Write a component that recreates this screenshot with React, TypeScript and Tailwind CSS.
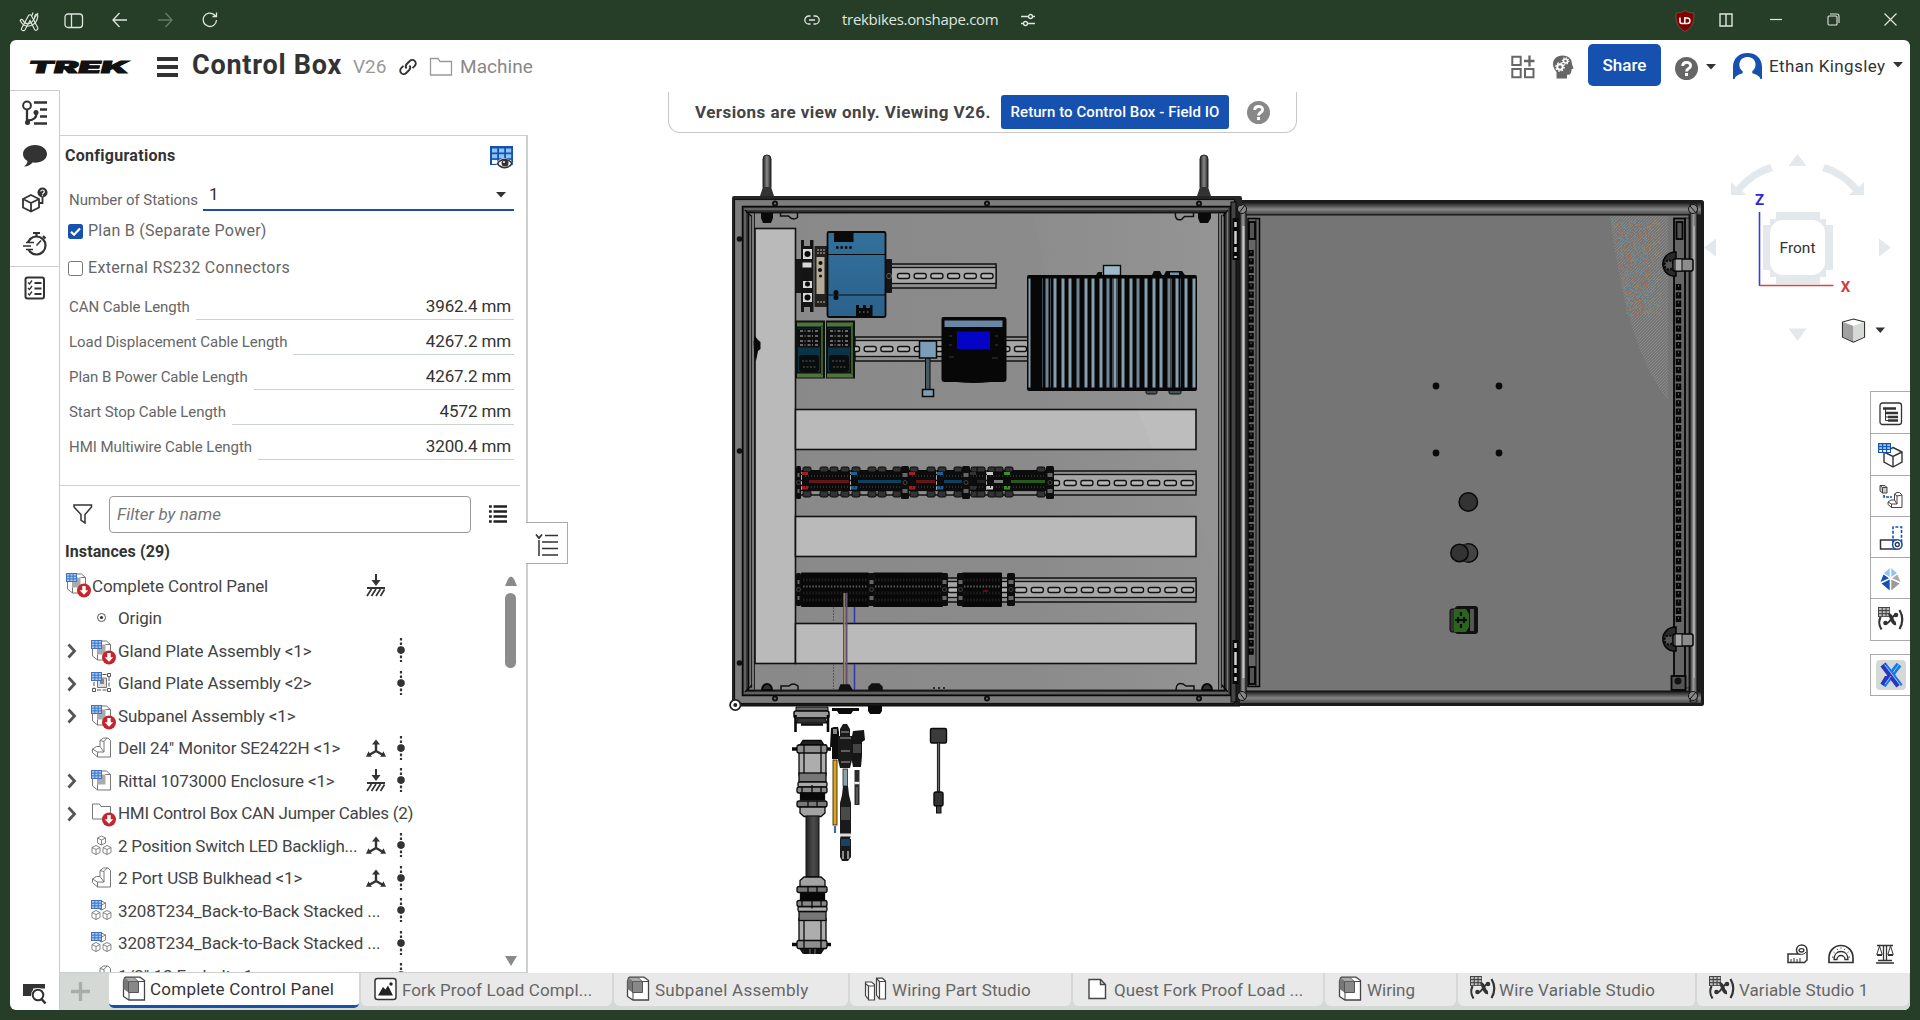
import React from "react";

const INK = "#333";

function Svg({ w, h, vb, children, className = "" }: { w: number; h: number; vb?: string; children: React.ReactNode; className?: string }) {
  return (
    <svg width={w} height={h} viewBox={vb ?? `0 0 ${w} ${h}`} fill="none" className={`block shrink-0 ${className}`}>
      {children}
    </svg>
  );
}

const Caret = ({ className = "" }: { className?: string }) => (
  <Svg w={10} h={6} className={className}>
    <path d="M0 0h10L5 5.5z" fill={INK} />
  </Svg>
);

/* ---------- small icons ---------- */

const GridBadge = ({ x = 0, y = 0, w = 11, h = 9 }: { x?: number; y?: number; w?: number; h?: number }) => (
  <g>
    <rect x={x} y={y} width={w} height={h} fill="#3c72c4" />
    {[0, 1, 2].map((c) =>
      [0, 1, 2].map((r) => (
        <rect key={`${c}${r}`} x={x + 1 + (c * (w - 1)) / 3} y={y + 1 + (r * (h - 1)) / 3} width={(w - 1) / 3 - 1} height={(h - 1) / 3 - 1} fill="#a9c9f2" />
      )),
    )}
  </g>
);

const AlertBadge = () => (
  <g>
    <circle cx="18" cy="17.5" r="7" fill="#c4262e" />
    <path d="M16.3 13h3.4v4.2h2.6L18 21.8l-4.3-4.6h2.6z" fill="#fff" />
  </g>
);

const AssemblyShape = () => (
  <g>
    <path d="M1.5 5.5v10.5l5 4H19.5V4.5L15.5 1H5z" fill="#fff" stroke="#777" />
    <path d="M6 4.5h8.5v10H6z" fill="#aaa" />
    <path d="M14.5 4.5h5M6.5 20v-5.5" stroke="#777" />
  </g>
);

const PartShape = () => (
  <path d="M1.5 12l4-2.5H9V3.5L12.5 1H17l2.5 2.5V20H6.5l-5-4.500zM1.500 12l5 3h6.500V4.500L9 3.500M13 4.500L16 1M6.500 15v5M13 15L9 9.500" fill="#fff" stroke="#777" strokeLinejoin="round" />
);

const Cubelet = ({ x, y }: { x: number; y: number }) => (
  <path transform={`translate(${x} ${y})`} d="M4.5.5l4 2v5l-4 2-4-2v-5zM.5 2.5l4 2 4-2M4.5 4.5v5" fill="#fff" stroke="#777" strokeWidth=".9" />
);

type NodeKind = "asmAlert" | "asm" | "pattern" | "part" | "folderAlert" | "cubes" | "cubesGrid" | "origin";

function NodeIcon({ kind }: { kind: NodeKind }) {
  return (
    <Svg w={26} h={26}>
      {(kind === "asmAlert" || kind === "asm") && (
        <>
          <AssemblyShape />
          <GridBadge x={0} y={0} />
          {kind === "asmAlert" && <AlertBadge />}
        </>
      )}
      {kind === "pattern" && (
        <>
          <path d="M3 10v7M6 18h9.500M18 5v11M11.500 2.500h4" stroke="#555" strokeDasharray="4 1.500" />
          <path d="M1.500 16.500h3v3h-3zM16.500 16.500h3v3h-3zM16.500 1.500h3v3h-3z" fill="#fff" stroke="#555" />
          <path d="M6.500 8v7.500h9V6H9z" fill="#ddd" stroke="#777" />
          <path d="M9 7h4v5H9z" fill="#888" />
          <GridBadge />
        </>
      )}
      {kind === "part" && <PartShape />}
      {kind === "folderAlert" && (
        <>
          <path d="M1.500 2h7l1.500 2.500h9.500V17h-18z" fill="#fff" stroke="#777" />
          <AlertBadge />
        </>
      )}
      {(kind === "cubes" || kind === "cubesGrid") && (
        <>
          <Cubelet x={6} y={0.5} />
          <Cubelet x={0.5} y={10} />
          <Cubelet x={11.500} y={10} />
          {kind === "cubesGrid" && <GridBadge />}
        </>
      )}
      {kind === "origin" && (
        <>
          <circle cx="10.500" cy="10.500" r="4" stroke="#555" />
          <circle cx="10.500" cy="10.500" r="1.600" fill="#333" />
        </>
      )}
    </Svg>
  );
}

const Grounded = () => (
  <Svg w={20} h={24} className="-ml-px">
    <path d="M10 0v7M1 14h18" stroke={INK} strokeWidth="2" />
    <path d="M5.500 6h9L10 12z" fill={INK} />
    <path d="M1 22l4.500-7M5.500 22l4.500-7M10 22l4.500-7M14.500 22l4-6.500" stroke={INK} strokeWidth="1.700" />
  </Svg>
);

const Mated = () => (
  <Svg w={20} h={20} className="-ml-px">
    <path d="M10 3v9L3 16M10 12l7 4" stroke={INK} strokeWidth="2.400" />
    <path d="M6 5.500L10 .5l4 5zM0 17.800l2.500-5.500 3.300 5.500zM20 17.800l-2.500-5.500-3.300 5.500z" fill={INK} />
  </Svg>
);

const Dots = () => (
  <Svg w={8} h={26} className="-mt-0.5">
    <path d="M4 1v24" stroke={INK} strokeWidth="2.200" strokeDasharray="2.600 1.800" />
    <circle cx="4" cy="13" r="3.800" fill={INK} />
  </Svg>
);

const AssemblyTab = () => (
  <Svg w={24} h={25} className="-mt-0.5">
    <path d="M1.500 5v15.500l5.500 3.500H22.500V4.500L18 1.200H3.500z" fill="#fff" stroke="#444" strokeWidth="1.300" />
    <path d="M1.500 2l5 3.500v11L1.500 13z" fill="#777" />
    <path d="M6.500 5.500h10v11h-10z" fill="#888" stroke="#555" />
    <path d="M2 1.500h10l4.500 4h-10z" fill="#aaa" stroke="#555" strokeWidth=".8" />
    <path d="M7 24v-7.500M16.500 5.500h6" stroke="#444" />
  </Svg>
);
const ImageTab = () => (
  <Svg w={24} h={24} className="-mt-0.5">
    <rect x="1" y="1.500" width="21" height="21" rx="2.500" fill="#fff" stroke="#333" strokeWidth="1.500" />
    <path d="M4 18.500L9 10l2.500 2.500L14 8.500l5 10z" fill="#222" />
    <circle cx="17" cy="7" r="1.700" fill="#222" />
  </Svg>
);
const PartTab = () => (
  <Svg w={23} h={24} className="-mt-0.5">
    <path d="M1.500 6.500l3 2.500v14h6V7.500L7.500 5h-6zM1.500 6v12.500l3 4M4.500 9h6" fill="#fff" stroke="#444" strokeWidth="1.200" />
    <path d="M12.500 1.500l3 3v17.500h6V4l-3-2.800h-6zM12.500 1.500V18l3 4M15.500 4.500h6" fill="#fff" stroke="#444" strokeWidth="1.200" />
  </Svg>
);
const DocTab = () => (
  <Svg w={19} h={22} className="-mt-0.5">
    <path d="M1 1.500h11.500l5 5v14H1zM12.500 1.500v5h5" fill="#fff" stroke="#444" strokeWidth="1.400" />
  </Svg>
);
const VariableTab = () => (
  <Svg w={26} h={26} className="-mt-0.5">
    <rect x="0" y="0" width="12" height="10" fill="#444" />
    {[0, 1, 2].map((c) => [0, 1, 2].map((r) => <rect key={`${c}${r}`} x={1 + c * 3.8} y={1 + r * 3.1} width="2.700" height="2" fill="#bbb" />))}
    <path d="M2.500 10c-2 5-2 8 1 12.500M21.500 3c3.500 6 3.500 13 0 19" stroke={INK} strokeWidth="2.200" />
    <path d="M18.500 8c-3.500-2-7 10-11 8.500" stroke={INK} strokeWidth="2" />
    <path d="M10.500 8c4-1 2.500 9 7.500 8.500" stroke={INK} strokeWidth="3.600" />
    <circle cx="18" cy="8" r="2.300" fill={INK} />
    <circle cx="7.500" cy="16" r="2.300" fill={INK} />
  </Svg>
);

const Help = ({ color, size }: { color: string; size: number }) => (
  <Svg w={size} h={size} vb="0 0 24 24">
    <circle cx="12" cy="12" r="12" fill={color} />
    <path d="M8 9.500C8 4.500 16.300 4.600 16.300 9c0 3-4.300 3-4.300 6" stroke="#fff" strokeWidth="2.900" />
    <rect x="10.500" y="16.700" width="3.100" height="3.200" fill="#fff" />
  </Svg>
);

/* ---------- browser chrome ---------- */

function BrowserBar() {
  return (
    <div className="flex h-10 shrink-0 items-center text-[#dfe5df]">
      <div className="flex w-[240px] items-center pl-[19px]">
        <Svg w={22} h={22} className="mt-1">
          <path d="M2.500 17.500L9.500 4.500c.6-1 2.200-1 2.800 0l6.500 12.300c.7 2.200-2.300 3.300-3.200 1.700L11 9.500 6 18.800c-1 1.700-4.300.7-3.500-1.300z" stroke="currentColor" strokeWidth="1.200" />
          <path d="M1.200 9.500c.3-1.600 2.500-1.600 2.800 0 3 5.500 10.500 4 12-5 .5-1.800 3-1.300 2.800.5C17.800 16 5.500 18.500 1.200 9.500z" stroke="currentColor" strokeWidth="1.200" />
          <path d="M15 7.500l4-5.500M13 4.500l1-3" stroke="currentColor" strokeWidth="1.200" />
        </Svg>
        <Svg w={20} h={18} className="ml-[23px] mt-0.5">
          <rect x="1" y="2" width="17.500" height="13.500" rx="3" stroke="currentColor" strokeWidth="1.300" />
          <path d="M7.500 2v13.500" stroke="currentColor" strokeWidth="1.300" />
        </Svg>
        <Svg w={18} h={18} className="ml-[27px]">
          <path d="M16 9H2M8.500 2L2 9l6.500 7" stroke="currentColor" strokeWidth="1.300" />
        </Svg>
        <Svg w={18} h={18} className="ml-[28px] opacity-35">
          <path d="M1 9h14M8.500 2L15 9l-6.500 7" stroke="currentColor" strokeWidth="1.300" />
        </Svg>
        <Svg w={18} h={18} className="ml-[26px]">
          <path d="M15.500 9a6.700 6.700 0 1 1-2.200-5.200L15 5.500M15.500 1.500v4h-4" stroke="currentColor" strokeWidth="1.300" />
        </Svg>
      </div>
      <div className="ml-[564px] flex w-[232px] items-center">
        <Svg w={16} h={10}>
          <path d="M6.500 1H4.800a4 4 0 0 0 0 8h1.700M9.500 1h1.700a4 4 0 0 1 0 8H9.500M5 5h6" stroke="currentColor" strokeWidth="1.300" />
        </Svg>
        <span className="ml-[22px] w-[156px] whitespace-nowrap pb-0.5 font-['Open_Sans',sans-serif] text-[15px] tracking-[-0.3px]">trekbikes.onshape.com</span>
        <Svg w={16} h={14} className="ml-[22px]">
          <path d="M1 3.500h7M13 3.500h2M1 10.500h2M8 10.500h7" stroke="currentColor" strokeWidth="1.400" />
          <circle cx="10.500" cy="3.500" r="2" stroke="currentColor" strokeWidth="1.300" />
          <circle cx="5.500" cy="10.500" r="2" stroke="currentColor" strokeWidth="1.300" />
        </Svg>
      </div>
      <div className="ml-auto flex items-center">
        <Svg w={20} h={22} className="mt-px">
          <path d="M10 .5c3 2 5.500 2.500 9 2.500 0 9-1 14-9 18.500C2 17 1 12 1 3 4.500 3 7 2.500 10 .5z" fill="#800000" stroke="#7d6b5a" strokeWidth=".6" />
          <path d="M5 7.500v4.300q0 1.700 1.800 1.700h3V7M9.800 8h2.400a2.700 2.700 0 0 1 0 5.500H9" stroke="#fff" strokeWidth="1.500" />
        </Svg>
        <Svg w={14} h={14} className="ml-[24px]">
          <path d="M1 1h12v12H1zM7 1v12" stroke="currentColor" strokeWidth="1.400" />
        </Svg>
        <Svg w={13} h={12} className="ml-[37px]">
          <path d="M0 5.500h12" stroke="currentColor" strokeWidth="1.200" />
        </Svg>
        <Svg w={13} h={13} className="-mt-0.5 ml-[44px]">
          <path d="M1 4a1 1 0 0 1 1-1h7a1 1 0 0 1 1 1v7a1 1 0 0 1-1 1H2a1 1 0 0 1-1-1zM3 1h7a2 2 0 0 1 2 2v7" stroke="currentColor" strokeWidth="1.100" />
        </Svg>
        <Svg w={13} h={13} className="-mt-0.5 ml-[44px] mr-[23px]">
          <path d="M.5.5l12 12M12.500.5l-12 12" stroke="currentColor" strokeWidth="1.200" />
        </Svg>
      </div>
    </div>
  );
}

/* ---------- document header ---------- */

function Header() {
  return (
    <header className="flex h-[50px] shrink-0">
      <div className="flex items-center pl-[15px]">
        <svg width="112" height="24" viewBox="0 0 112 24" className="mt-1 block">
          <text x="2" y="18" transform="translate(5 0) skewX(-14)" textLength="100" lengthAdjust="spacingAndGlyphs" fontFamily="Inter, sans-serif" fontWeight="900" fontSize="16.500" stroke="#111" strokeWidth=".9" fill="#111">
            TREK
          </text>
        </svg>
        <div className="ml-[20px] mt-1 flex w-[21px] flex-col gap-1">
          <div className="h-1 bg-[#333]" />
          <div className="h-1 bg-[#333]" />
          <div className="h-1 bg-[#333]" />
        </div>
        <h1 className="ml-[14px] w-[153px] whitespace-nowrap text-[27px] font-bold tracking-[0.75px] text-[#333]">Control Box</h1>
        <span className="ml-[8px] mt-1 w-[46px] text-[19px] text-[#999]">V26</span>
        <Svg w={18} h={18} className="mt-1">
          <path d="M7.500 10.500a3.500 3.500 0 0 1 .3-4.500l3-3a3.400 3.400 0 0 1 5 4.800l-2.300 2.300M10.500 7.500a3.500 3.500 0 0 1-.3 4.500l-3 3a3.400 3.400 0 0 1-5-4.800l2.300-2.300" stroke={INK} strokeWidth="1.900" />
        </Svg>
        <Svg w={24} h={20} className="ml-[12px] mt-1">
          <path d="M1.500 1.500h7.500l2 3h11.500v13.500h-21z" stroke="#999" strokeWidth="1.300" />
        </Svg>
        <span className="ml-[7px] mt-1 text-[19px] tracking-[0.05px] text-[#888]">Machine</span>
      </div>
      <div className="ml-auto flex items-center">
        <Svg w={24} h={24} className="mt-1">
          <path d="M1.300 1.800h8.400V10H1.300zM1.300 14h8.400v8.300H1.300zM14 14h8.500v8.300H14z" stroke="#666" strokeWidth="2" />
          <path d="M18.500.5v11M13 6h10.500" stroke="#666" strokeWidth="2.300" />
        </Svg>
        <Svg w={22} h={24} className="ml-[17px] mt-1">
          <path d="M4.500 23.500V17C-2 10 1 .5 10.500.5c7 0 9.500 4.500 9.500 8.500l1.500 4.500-2 .8c0 4-1 5.700-4.500 5.500v3.700z" fill="#666" />
          <circle cx="8" cy="12" r="2.700" stroke="#fff" strokeWidth="2" />
          <circle cx="8" cy="12" r="4.200" stroke="#fff" strokeWidth="1.300" strokeDasharray="1.600 1.700" />
          <circle cx="13.500" cy="6" r="2" stroke="#fff" strokeWidth="1.600" />
          <circle cx="13.500" cy="6" r="3.200" stroke="#fff" strokeWidth="1.200" strokeDasharray="1.200 1.300" />
        </Svg>
        <button className="ml-[14px] h-[42px] w-[73px] rounded-[5px] bg-[#1651b0] pt-0.5 text-[17px] font-medium text-white">Share</button>
        <div className="ml-[14px] mt-1.5"><Help color="#666" size={23} /></div>
        <Caret className="ml-[8px] mt-1" />
        <Svg w={31} h={28} className="ml-[16px] mt-0.5">
          <path d="M1 27V15C1 7 6.500 1 15.500 1S30 7 30 15v12h-1.500c-.8-3-4-4.500-8.200-5.700v-2c6-4.800 3.500-14.300-4.800-14.300s-10.800 9.500-4.800 14.300v2C6.500 22.500 3.300 24 2.500 27z" fill="#1651b0" />
        </Svg>
        <span className="ml-[6px] mt-1 w-[117px] whitespace-nowrap text-[17px] tracking-[0.38px] text-[#333]">Ethan Kingsley</span>
        <Caret className="ml-[7px] mr-[7px]" />
      </div>
    </header>
  );
}

/* ---------- left rail ---------- */

function LeftRail() {
  return (
    <aside className="flex w-[50px] shrink-0 flex-col items-center border-r border-t border-[#ccc]">
      <Svg w={26} h={26} className="mt-[9px]">
        <circle cx="5" cy="5.500" r="3.900" stroke={INK} strokeWidth="2" />
        <path d="M5 9.500V24M5.500 20.500c5 0 9-2 9-7.500" stroke={INK} strokeWidth="2.300" />
        <circle cx="5.500" cy="22.500" r="2.500" fill={INK} />
        <circle cx="14" cy="12.500" r="2.500" fill={INK} />
        <path d="M12 2.500h13M18 9.500h7M18 16.500h7M12 23.500h13" stroke={INK} strokeWidth="2.300" />
      </Svg>
      <Svg w={26} h={24} className="mt-[18px]">
        <path d="M13 1C6 1 1 5 1 10c0 3 1.800 5.500 4.500 7C5.500 19 4 21 2 22.500c4 0 7-2 8.500-4 8 1 14.500-3 14.500-8.500C25 5 20 1 13 1z" fill={INK} />
      </Svg>
      <Svg w={26} h={26} className="mt-[19px]">
        <path d="M9 8l8 4v8.500l-8 4-8-4V12zM1 12l8 4 8-4M9 16v8.500" stroke={INK} strokeWidth="1.800" />
        <path d="M20.500 10v6H17" stroke={INK} strokeWidth="1.800" />
        <circle cx="20.500" cy="5.500" r="5" fill={INK} />
        <path d="M18.800 4.500c0-2 3.500-2 3.500.2 0 1.300-1.800 1.200-1.800 2.800M20.500 8.300v1" stroke="#fff" strokeWidth="1.200" />
      </Svg>
      <Svg w={26} h={26} className="mt-[18px]">
        <circle cx="14.500" cy="14.500" r="9" stroke={INK} strokeWidth="2.200" />
        <path d="M0 11h10v8H0z" fill="#fff" />
        <path d="M11 2h7M14.500 2v3M21 5l2.500 2.500" stroke={INK} strokeWidth="2.200" />
        <path d="M14.500 14.500L19 9.500M4 11.500h8M1 15h8M4 18.500h7" stroke={INK} strokeWidth="1.600" />
      </Svg>
      <div className="mt-[9px] h-px w-full bg-[#ccc]" />
      <Svg w={22} h={24} className="mt-[9px]">
        <rect x="1.500" y="1.500" width="18.500" height="21" rx="2" stroke={INK} strokeWidth="2" />
        <path d="M4 6.500l1.500 1.500L8 4.500M4 12l1.500 1.500L8 10M4 17.500L5.500 19 8 15.500" stroke={INK} strokeWidth="1.300" />
        <path d="M10.500 7h7M10.500 12.500h7M10.500 18h7" stroke={INK} strokeWidth="2" />
      </Svg>
      <Svg w={26} h={22} className="mb-[5px] mt-auto">
        <path d="M1 1h22v4.500H1zM1 5h10v8H1z" fill={INK} />
        <circle cx="16" cy="12" r="7" fill="#fff" />
        <circle cx="16" cy="12" r="5.300" fill="#fff" stroke={INK} strokeWidth="2" />
        <path d="M19.500 16l4 4.500" stroke={INK} strokeWidth="2.600" />
      </Svg>
    </aside>
  );
}

/* ---------- configuration + instance panel ---------- */

const lengths = [
  ["CAN Cable Length", "3962.4 mm"],
  ["Load Displacement Cable Length", "4267.2 mm"],
  ["Plan B Power Cable Length", "4267.2 mm"],
  ["Start Stop Cable Length", "4572 mm"],
  ["HMI Multiwire Cable Length", "3200.4 mm"],
];

interface Row {
  label: string;
  kind: NodeKind;
  open?: boolean;
  status?: "ground" | "mate";
  dots?: boolean;
  track?: string;
}

const rows: Row[] = [
  { label: "Origin", kind: "origin" },
  { label: "Gland Plate Assembly <1>", kind: "asmAlert", open: true, dots: true },
  { label: "Gland Plate Assembly <2>", kind: "pattern", open: true, dots: true },
  { label: "Subpanel Assembly <1>", kind: "asmAlert", open: true },
  { label: 'Dell 24" Monitor SE2422H <1>', kind: "part", status: "mate", dots: true },
  { label: "Rittal 1073000 Enclosure <1>", kind: "asm", open: true, status: "ground", dots: true },
  { label: "HMI Control Box CAN Jumper Cables (2)", kind: "folderAlert", open: true, track: "tracking-[-0.29px]" },
  { label: "2 Position Switch LED Backligh...", kind: "cubes", status: "mate", dots: true, track: "tracking-[-0.24px]" },
  { label: "2 Port USB Bulkhead <1>", kind: "part", status: "mate", dots: true },
  { label: "3208T234_Back-to-Back Stacked ...", kind: "cubesGrid", dots: true },
  { label: "3208T234_Back-to-Back Stacked ...", kind: "cubesGrid", dots: true },
  { label: '1/2"-13 Eyebolt <1>', kind: "part", dots: true },
];

function Check({ on }: { on?: boolean }) {
  return on ? (
    <Svg w={15} h={15}>
      <rect width="15" height="15" rx="2.500" fill="#1651b0" />
      <path d="M3 7.800l3 3 6-6.300" stroke="#fff" strokeWidth="2.200" />
    </Svg>
  ) : (
    <div className="h-[15px] w-[15px] rounded-[2.5px] border border-[#767676]" />
  );
}

function Panel() {
  return (
    <section className="mt-[45px] flex h-[838px] w-[468px] flex-col border-b border-r-2 border-t border-[#ccd0ce] text-[#333]">
      <div className="flex h-[40px] items-center justify-between pl-[5px] pr-[12px]">
        <h2 className="text-[16px] font-bold tracking-[0.28px]">Configurations</h2>
        <Svg w={24} h={24} className="mt-[3px]">
          <rect x="0" y="0" width="23" height="19" fill="#1651b0" />
          {[0, 1, 2].map((c) =>
            [0, 1, 2].map((r) => (
              <rect key={`${c}${r}`} x={2 + c * 7} y={2.5 + r * 5.7} width="5.200" height="4" fill={r === 2 ? "#fff" : "#8ec5f5"} />
            )),
          )}
          <path d="M6 17.500c4-7 12-7 17 0-5 7-13 7-17 0z" fill="#fff" />
          <path d="M7.500 17.500c3.500-5.500 11-5.500 14.500 0-3.500 5.500-11 5.500-14.500 0z" fill="#fff" stroke={INK} strokeWidth="1.500" />
          <circle cx="15" cy="17" r="3.500" fill={INK} />
          <circle cx="14" cy="16" r="1" fill="#fff" />
        </Svg>
      </div>
      <div className="flex h-[35px] items-end pl-[9px]">
        <span className="w-[134px] text-[15px] tracking-[-0.05px] text-[#666]">Number of Stations</span>
        <div className="flex h-[30px] w-[311px] items-center justify-between border-b-2 border-[#1651b0] pl-[6px] pr-[8px] text-[17px]">
          <span>1</span>
          <Caret />
        </div>
      </div>
      <div className="flex h-[40px] items-center gap-[5px] pl-[8px] text-[16px] tracking-[0.26px] text-[#666]">
        <Check on />
        Plan B (Separate Power)
      </div>
      <div className="flex h-[34px] items-center gap-[5px] pl-[8px] text-[16px] tracking-[0.33px] text-[#666]">
        <Check />
        External RS232 Connectors
      </div>
      <div className="pl-[9px] pr-[12px]">
        {lengths.map(([label, value]) => (
          <div key={label} className="flex h-[35px] items-end">
            <span className="pb-[2px] text-[15px] tracking-[-0.05px] text-[#666]">{label}</span>
            <span className="ml-[6px] flex-1 border-b border-[#ccd3ce] pr-[3px] text-right text-[17px] leading-[25px] tracking-[-0.12px]">{value}</span>
          </div>
        ))}
      </div>
      <div className="mr-[6px] mt-[25px] h-px shrink-0 bg-[#ccd3ce]" />
      <div className="flex h-[56px] shrink-0 items-center pl-[13px]">
        <Svg w={20} h={20}>
          <path d="M1 1h17.500v2L12 10.500V19l-4-3v-5.500L1 3z" stroke={INK} strokeWidth="1.500" />
        </Svg>
        <div className="ml-[16px] flex h-[37px] w-[362px] items-center rounded border border-[#999] pl-[7px] pt-px text-[17px] italic tracking-[0.05px] text-[#757575]">Filter by name</div>
        <Svg w={19} h={18} className="ml-[18px]">
          <path d="M4.500 1.500H18M4.500 6.500H18M4.500 11.500H18M4.500 16.500H18" stroke="#222" strokeWidth="2.500" />
          <path d="M0 1.500h2.800M0 6.500h2.800M0 11.500h2.800M0 16.500h2.800" stroke="#222" strokeWidth="2.500" />
        </Svg>
      </div>
      <h2 className="h-[28px] shrink-0 pl-[5px] text-[16px] font-bold leading-[20px] tracking-[0.1px]">Instances (29)</h2>
      <div className="flex min-h-0 flex-1 overflow-hidden">
        <div className="w-[440px] text-[17px] tracking-[-0.13px] text-[#444]">
          <div className="flex h-[32.5px] items-center pl-[6px]">
            <NodeIcon kind="asmAlert" />
            <span className="w-[275px] whitespace-nowrap">Complete Control Panel</span>
            <Grounded />
          </div>
          {rows.map((r, i) => (
            <div key={i} className="flex h-[32.5px] items-center pl-[8px]">
              <div className="w-[23px]">
                {r.open && (
                  <Svg w={10} h={16} className="-ml-px">
                    <path d="M1.500 1.500L7.500 8l-6 6.500" stroke="#555" strokeWidth="2.800" />
                  </Svg>
                )}
              </div>
              <div className="w-[27px] pt-[3px]"><NodeIcon kind={r.kind} /></div>
              <span className={`whitespace-nowrap ${r.status ? "w-[249px]" : "w-[279px]"} ${r.track ?? ""}`}>{r.label}</span>
              {r.status && <div className="w-[30px]">{r.status === "ground" ? <Grounded /> : <Mated />}</div>}
              {r.dots && <Dots />}
            </div>
          ))}
        </div>
        <div className="flex w-[22px] flex-col items-center pr-px pt-[6px]">
          <Svg w={12} h={10}><path d="M0 10h12L9 3Q6-2 3 3z" fill="#8a8a8a" /></Svg>
          <div className="mt-[7px] h-[75px] w-[11px] rounded-full bg-[#8c8c8c]" />
          <Svg w={12} h={10} className="mb-[6px] mt-auto"><path d="M0 0h12L6 10z" fill="#8a8a8a" /></Svg>
        </div>
      </div>
    </section>
  );
}

/* ---------- CAD model ---------- */

const speckle = (() => {
  let s = 7;
  const rnd = () => ((s = (s * 48271) % 2147483647) / 2147483647);
  const out: { x: number; y: number; w: number; h: number; c: string }[] = [];
  for (let i = 0; i < 760; i++) {
    const y = 219 + rnd() * 96;
    const x0 = 1611 + (y - 219) * 0.16;
    const x = x0 + rnd() * (1660 - x0);
    const r = rnd();
    const edge = x > 1648;
    out.push({
      x: Math.round(x),
      y: Math.round(y),
      w: edge ? 1 : 1 + Math.floor(rnd() * 3),
      h: edge ? 1 : 1 + Math.floor(rnd() * 2),
      c: edge ? (r < 0.5 ? "#9a8350" : "#6f8790") : r < 0.52 ? "#6d858f" : r < 0.93 ? "#95705f" : "#9a8350",
    });
  }
  return out;
})();

function Rail({ x1, x2, y, first }: { x1: number; x2: number; y: number; first: number }) {
  const slots: number[] = [];
  for (let x = first; x < x2 - 5; x += 16.7) slots.push(x);
  return (
    <g stroke="#111">
      <rect x={x1} y={y} width={x2 - x1} height="24" fill="#8e8e8e" strokeWidth="1.500" />
      <rect x={x1} y={y + 3.5} width={x2 - x1} height="16" fill="#a6a6a6" strokeWidth="1.300" />
      {slots.map((x) => (
        <rect key={x} x={x - 6} y={y + 9.5} width="12" height="5" rx="2" fill="#b5b5b5" strokeWidth="1.400" />
      ))}
    </g>
  );
}

const Duct = ({ x, y, w, h }: { x: number; y: number; w: number; h: number }) => <rect x={x} y={y} width={w} height={h} fill="#bababa" stroke="#111" strokeWidth="1.600" />;

function Terminals({ x, w, c }: { x: number; w: number; c: string }) {
  return (
    <g>
      <rect x={x} y="470" width={w} height="21" fill="#0c0c0c" />
      {[0, 1].map((k) => (
        <g key={k} fill="#333" stroke="#080808">
          <rect x={x + 1 + k * (w - 10)} y="467" width="8" height="5" rx="1.500" />
          <rect x={x + 1 + k * (w - 10)} y="491" width="8" height="6" rx="1.500" />
        </g>
      ))}
      <rect x={x} y="472" width="6" height="3" fill={c} />
      <rect x={x} y="486" width="6" height="3.500" fill={c} />
      <path d={`M${x + 7} 481.500h${w - 8}`} stroke={c} strokeWidth="3" opacity=".6" />
      <path d={`M${x + 3} 476h${w - 4}M${x + 3} 487h${w - 4}`} stroke="#2b2b2b" strokeWidth="2" strokeDasharray="1 2" />
    </g>
  );
}

const Clamp = ({ x, y, w = 7, h = 33 }: { x: number; y: number; w?: number; h?: number }) => (
  <g>
    <rect x={x} y={y} width={w} height={h} rx="1.500" fill="#0d0d0d" />
    <rect x={x + 1.5} y={y + 7} width={w - 3} height="4" fill="#666" />
    <rect x={x + 1.5} y={y + h - 10} width={w - 3} height="4" fill="#666" />
    <circle cx={x + w / 2} cy={y + h / 2} r="2" stroke="#444" fill="none" />
  </g>
);

const Eyebolt = ({ x }: { x: number }) => (
  <g>
    <rect x={x - 4} y="155" width="8" height="36" rx="4" fill="url(#bolt)" stroke="#222" />
    <path d={`M${x - 4} 187h8l3 9h-14z`} fill="#333" />
  </g>
);

function Holes({ x, y1, y2 }: { x: number; y1: number; y2: number }) {
  return (
    <g>
      <path d={`M${x} ${y1}V${y2}`} stroke="#050505" strokeWidth="5.500" strokeDasharray="6.300 2" />
      <path d={`M${x} ${y1}V${y2}`} stroke="#555" strokeWidth="1.200" strokeDasharray="2 6.300" strokeDashoffset="-1" />
    </g>
  );
}

function Latch({ y }: { y: number }) {
  return (
    <g stroke="#050505">
      <path d={`M1676 ${y - 13}c-10 0-14 8-13 14s6 11 13 10z`} fill="#2a2a2a" strokeWidth="1.500" />
      <circle cx="1669" cy={y} r="4.500" fill="#555" strokeDasharray="2 1.500" strokeWidth="2" />
      <rect x="1673" y={y - 6} width="20" height="12" rx="2" fill="#8c8c8c" strokeWidth="1.500" />
      <rect x="1675" y={y - 6} width="7" height="12" fill="#a8a8a8" />
    </g>
  );
}

/* One heavy-duty plug; the lower one is the same part mirrored. */
function Plug() {
  return (
    <g stroke="#0a0a0a" strokeWidth="1.300">
      <path d="M792 749h39" strokeWidth="3.500" />
      <path d="M800 745l3-4.500h18l3 4.500z" fill="#222" />
      <rect x="799" y="745" width="27" height="30" fill="#adadad" />
      <rect x="797" y="745" width="30" height="8" rx="2" fill="#8e8e8e" />
      <path d="M804 745v30M821 745v30" />
      <rect x="799" y="773" width="27" height="9" fill="#777" />
      <rect x="798" y="782" width="29" height="5" rx="1.500" fill="#aaa" />
      <rect x="797" y="787" width="30" height="6" rx="2" fill="#888" />
      <path d="M802 787v6M812 785v8M821 787v6" />
      <rect x="800.500" y="793" width="24" height="7" fill="#080808" />
      <rect x="797" y="801" width="30" height="6" rx="2" fill="#777" />
      <path d="M808 801v6M817 801v6" />
      <path d="M800 807h25v6l-4 3.500h-17l-4-3.500z" fill="#a3a3a3" />
    </g>
  );
}

const pcFins = [1030, 1047, 1055, 1063, 1070, 1078, 1086, 1093, 1101, 1108, 1115, 1123, 1131, 1138, 1146, 1154, 1161, 1169, 1177, 1186, 1194];

function Model() {
  return (
    <svg className="absolute left-[192px] top-[50px]" width="1000" height="830" viewBox="720 140 1000 830" fill="none">
      <defs>
        <linearGradient id="bolt"><stop offset="0" stopColor="#222" /><stop offset=".5" stopColor="#888" /><stop offset="1" stopColor="#222" /></linearGradient>
        <linearGradient id="tube"><stop offset="0" stopColor="#333" /><stop offset=".5" stopColor="#999" /><stop offset="1" stopColor="#444" /></linearGradient>
        <linearGradient id="tubeV" x2="0" y2="1"><stop offset="0" stopColor="#222" /><stop offset=".55" stopColor="#858585" /><stop offset="1" stopColor="#4a4a4a" /></linearGradient>
        <linearGradient id="cable"><stop offset="0" stopColor="#222" /><stop offset=".55" stopColor="#4c4c4c" /><stop offset="1" stopColor="#333" /></linearGradient>
        <linearGradient id="psu" x2="0" y2="1"><stop offset="0" stopColor="#32709b" /><stop offset="1" stopColor="#2b628c" /></linearGradient>
        <linearGradient id="back" x2="1" y2="0"><stop offset="0" stopColor="#898989" /><stop offset=".6" stopColor="#8b8b8b" /><stop offset="1" stopColor="#939393" /></linearGradient>
        <pattern id="grain" width="3" height="3" patternUnits="userSpaceOnUse"><path d="M0 0h1v1H0zM2 1h1v1H2zM1 2h1v1H1z" fill="#a2a2a2" opacity=".5" /></pattern>
      </defs>

      {/* door */}
      <rect x="1236" y="200" width="468" height="506" rx="2.500" fill="#1b1b1b" />
      <rect x="1240" y="203" width="461" height="11.500" fill="url(#tubeV)" />
      <rect x="1240" y="692" width="461" height="11" fill="url(#tubeV)" />
      <rect x="1246" y="215" width="443" height="476" fill="#757575" stroke="#111" />
      <path d="M1610 216h58v184c-30-36-48-104-58-184z" fill="url(#grain)" />
      {speckle.map((p, i) => <rect key={i} x={p.x} y={p.y} width={p.w} height={p.h} fill={p.c} />)}
      <rect x="1240" y="210" width="6" height="484" fill="url(#tube)" stroke="#111" strokeWidth=".8" />
      <path d="M1243.500 226v452" stroke="#c4cac4" strokeWidth="2" />
      <rect x="1690" y="204" width="7" height="498" fill="url(#tube)" stroke="#111" strokeWidth=".8" />
      <path d="M1694 226v452" stroke="#aaa" strokeWidth="2" />
      <rect x="1685" y="218" width="4" height="470" fill="#666" stroke="#111" strokeWidth=".8" />
      <g stroke="#111" fill="#888">
        <circle cx="1242" cy="209" r="4.500" /><circle cx="1693" cy="209" r="4.500" />
        <circle cx="1242" cy="696" r="4.500" /><circle cx="1693" cy="696" r="4.500" />
        <path d="M1239 213l6-8M1690 206l6 7M1239 692l6 8M1690 699l6-7" />
      </g>
      <rect x="1248" y="218.500" width="11.500" height="468" fill="#666" stroke="#050505" strokeWidth="1.500" />
      <path d="M1256 219v467" stroke="#111" />
      <rect x="1249" y="222" width="6" height="17" fill="#555" stroke="#050505" strokeWidth="1.800" />
      <rect x="1249" y="667" width="6" height="17" fill="#555" stroke="#050505" strokeWidth="1.800" />
      <Holes x={1251} y1={250} y2={655} />
      <rect x="1674" y="218.500" width="11" height="471" fill="#666" stroke="#050505" strokeWidth="1.800" />
      <rect x="1676.500" y="222" width="6" height="17" fill="#555" stroke="#050505" strokeWidth="1.800" />
      <Holes x={1678.5} y1={284} y2={622} />
      <Latch y={265} />
      <Latch y={640} />
      <rect x="1671.500" y="676" width="14" height="14" fill="#555" stroke="#050505" strokeWidth="1.800" />
      <circle cx="1678" cy="681" r="3.500" fill="#111" />
      {[[1436, 386], [1499, 386], [1436, 453], [1499, 453]].map(([x, y]) => <circle key={`${x}${y}`} cx={x} cy={y} r="3.400" fill="#0a0a0a" />)}
      <circle cx="1468.300" cy="502" r="9.200" fill="#333" stroke="#0a0a0a" strokeWidth="1.500" />
      <circle cx="1468.500" cy="553" r="9.200" fill="#444" stroke="#0a0a0a" strokeWidth="1.500" />
      <path d="M1460 544.500h8.500v17H1460z" fill="#3c3c3c" />
      <circle cx="1459.500" cy="553" r="8.700" fill="#333" stroke="#0a0a0a" strokeWidth="1.500" />
      <rect x="1450" y="609" width="10" height="23" rx="2" fill="#333" stroke="#0a0a0a" />
      <rect x="1455" y="606" width="23" height="28" rx="3" fill="#111" />
      <rect x="1470" y="609" width="4" height="22" fill="#555" />
      <path d="M1454 609h12l3 5v13l-3 5h-12z" fill="#2b651c" />
      <path d="M1455 620h12M1461 612v4M1461 624v4M1458 617v6M1464 617v6" stroke="#0a0a0a" strokeWidth="2.200" />

      {/* enclosure body */}
      <Eyebolt x={767} />
      <Eyebolt x={1204} />
      <path d="M732 198q0-2 2-2h506q2 0 2 2v8h-6v500H732z" fill="#262626" />
      <rect x="734.500" y="199.500" width="500" height="504" fill="#7d7d7d" stroke="#111" strokeWidth="1.200" />
      <rect x="742.500" y="206.500" width="488" height="489" fill="#3a3a3a" stroke="#080808" strokeWidth="1.500" />
      <rect x="745" y="209" width="482.500" height="484" stroke="#777" strokeWidth="1.300" />
      <rect x="748.500" y="212.500" width="476" height="478" fill="#777" stroke="#0a0a0a" strokeWidth="1.600" />
      <rect x="754.500" y="213" width="464" height="477" fill="url(#back)" stroke="#222" strokeWidth="1" />
      <path d="M751.500 215v473M1221.500 215v473" stroke="#222" />
      <path d="M1033 214h185v360c-24-50-38-110-52-184l-60-30-60-85z" fill="url(#grain)" opacity=".35" />
      <path d="M745 210l6 6M745 692l7-7M1228 210l-5 6M1228 692l-6-7" stroke="#080808" strokeWidth="1.300" />
      {[775, 987, 1199].map((x) => [203.5, 698.5].map((y) => (
        <g key={`${x}${y}`}><circle cx={x} cy={y} r="3" fill="#111" /><circle cx={x} cy={y} r="1" fill="#777" /></g>
      )))}
      {[239, 451, 663].map((y) => <circle key={y} cx="739.500" cy={y} r="2.800" fill="#111" />)}
      <path d="M761 213h12v5l-2 5h-8l-2-5zM1198 213h13v5l-3 5h-8l-2-5z" fill="#0a0a0a" />
      <path d="M780.500 213v3h8q4 5 9 1.500v-4.500M1175.500 213q-1 8 6 6.500l3-3h9v-3.500M781 690v-4h8q4-4 9 0v4M1176 690q0-8 7-6l3 2h8v4" stroke="#111" strokeWidth="1.500" />
      <path d="M762 690a5 6 0 0 1 10 0zM1202 690a5 6 0 0 1 10 0z" fill="#333" stroke="#0a0a0a" strokeWidth="2" />
      <rect x="1231" y="202" width="5" height="500" fill="#444" stroke="#080808" />
      <path d="M1235.500 218v42M1235.500 640v44" stroke="#080808" strokeWidth="6" />
      <path d="M1235.500 222v36M1235.500 643v38" stroke="#d0d0d0" strokeWidth="2.500" strokeDasharray="5 4 13 3" />

      {/* back panel ducts and rails */}
      <Duct x={755} y={228.5} w={40.5} h={435} />
      <Duct x={795.5} y={409.5} w={400.5} h={40} />
      <Duct x={795.5} y={516.5} w={400.5} h={40} />
      <Duct x={795.5} y={623.5} w={400.5} h={40} />
      <path d="M1138 411h57v37h-42z" fill="#c4c4c4" opacity=".4" />
      <path d="M755 336l3 4 2.500 2v7l-2.500 2-2 10-1.500-5-1-14z" fill="#080808" />
      <Rail x1={890} x2={996} y={264} first={903.5} />
      <Rail x1={855} x2={1028} y={337} first={853.5} />
      <Rail x1={796} x2={1196} y={471} first={803} />
      <Rail x1={796} x2={1196} y={578} first={803.5} />

      {/* breaker, relay and power supply */}
      <rect x="796" y="259" width="8" height="34" fill="#161616" />
      <path d="M801 240h3v6h6v-6h3.500v72H810v-5h-6v5h-3z" fill="#141414" />
      <g fill="#d8d8d8"><rect x="803" y="249" width="9" height="10" /><rect x="802.500" y="262.500" width="9" height="5" /><rect x="803" y="281" width="9" height="7" /><rect x="803" y="293" width="9" height="9" /></g>
      <g fill="#0a0a0a"><circle cx="807.500" cy="254" r="3" /><circle cx="807.500" cy="284" r="2.500" /><circle cx="807.500" cy="297.500" r="3" /></g>
      <rect x="814.500" y="246" width="13" height="61" fill="#23211d" />
      <rect x="816.500" y="257" width="8" height="37" fill="#b5ab96" />
      <path d="M817 250h8M817 253h8M817 302h8" stroke="#8b8577" strokeWidth="1.500" strokeDasharray="2 1" />
      <g fill="#111"><circle cx="820.500" cy="263" r="2" /><circle cx="820" cy="270" r="2" /><circle cx="820.500" cy="276" r="1.500" /></g>
      <rect x="886" y="259" width="6" height="34" rx="1" fill="#161616" />
      <circle cx="889" cy="276" r="2.500" stroke="#666" />
      <rect x="827.500" y="232" width="58" height="85" rx="1.500" fill="url(#psu)" stroke="#0a0a0a" strokeWidth="1.800" />
      <path d="M828 254.500h57M828 295h57" stroke="#0a0a0a" />
      <rect x="834" y="233" width="19.500" height="9" fill="#0a0a0a" />
      <path d="M836 247.500h16" stroke="#0a0a0a" strokeWidth="2.600" strokeDasharray="2.600 1.800" />
      <path d="M856 305h3v3h4v-3h3v3h4v-3h2.500v12H856z" fill="#0a0a0a" />
      <path d="M859 312h12" stroke="#35592f" strokeWidth="2" strokeDasharray="1.500 2.500" />
      <circle cx="836" cy="292.500" r="2.500" fill="#0a0a0a" /><circle cx="836" cy="297.500" r="2.500" fill="#0a0a0a" />

      {/* I/O modules */}
      {[796, 826].map((x) => (
        <g key={x}>
          <rect x={x} y="320.500" width="29" height="58" fill="#0d120c" />
          <rect x={x + 1} y="322.500" width="26" height="4" fill="#50723f" />
          <rect x={x + 1} y="373.500" width="26" height="4" fill="#50723f" />
          <rect x={x + 25} y="325" width="2" height="50" fill="#3c5c30" />
          <rect x={x + 2} y="328" width="22" height="44" fill="#0a3346" />
          <rect x={x + 2} y="328.500" width="22" height="19" rx="2" fill="#0e0e0e" />
          <path d={`M${x + 4} 331h18M${x + 4} 336h18M${x + 4} 341h18M${x + 4} 345h18`} stroke="#858585" strokeWidth="1.400" strokeDasharray="3 1.500 1 2" />
          <rect x={x + 3} y="355" width="20" height="17" rx="3" fill="#0a0d0e" />
          <path d={`M${x + 6} 361h14M${x + 7} 367h13`} stroke="#333" strokeWidth="2" strokeDasharray="2 1.500" />
        </g>
      ))}

      {/* sensor, display and industrial PC */}
      <rect x="925.500" y="358" width="4.500" height="32" fill="#4a5862" stroke="#0a0a0a" />
      <rect x="919.500" y="341" width="17" height="17" fill="#7b9db8" stroke="#0a0a0a" strokeWidth="1.500" />
      <rect x="922.500" y="389.500" width="11" height="7" fill="#7b9db8" stroke="#0a0a0a" strokeWidth="1.500" />
      <path d="M943 317h61q2 0 2.500 2v60q0 3-3 3h-13q-17 2-34 0h-12q-3 0-3-3v-60q0-2 1.500-2z" fill="#070707" />
      <rect x="944.500" y="320.500" width="58" height="6.500" fill="#6a86a6" />
      <rect x="957" y="331.500" width="33" height="17.500" fill="#0404c6" />
      <g fill="#16222a"><rect x="949" y="335" width="3" height="2" /><rect x="949" y="344" width="3" height="2" /><rect x="995" y="335" width="3" height="2" /><rect x="995" y="344" width="3" height="2" /><rect x="949" y="356" width="5" height="2" /><rect x="992" y="357" width="6" height="2" /></g>
      <rect x="1103.500" y="265.500" width="17" height="10" fill="#9db8ca" stroke="#0a0a0a" strokeWidth="1.400" />
      <path d="M1096 275h6v-3h-4zM1152 275l2-4h6l2 4zM1164 275l2-4h16l3 4z" fill="#0a0a0a" />
      <rect x="1170" y="272.500" width="9" height="3" fill="#7a93a4" />
      <rect x="1146" y="388" width="11" height="6" rx="1.500" fill="#44525b" stroke="#0a0a0a" /><rect x="1169" y="388" width="12" height="6" rx="1.500" fill="#44525b" stroke="#0a0a0a" />
      <rect x="1027" y="275" width="170" height="116" rx="2" fill="#070707" />
      {pcFins.map((x, i) => <rect key={x} x={x - 1.5} y="278.500" width={i === 0 ? 2 : 3} height="109" fill={i % 4 === 1 ? "#6f8391" : "#869eae"} />)}
      {[1042, 1050, 1106, 1112, 1117, 1171, 1180].map((x) => <rect key={x} x={x} y="278.500" width="1" height="109" fill="#3f4c55" />)}

      {/* terminal strips */}
      <Clamp x={796} y={466} w={5} />
      <Terminals x={802} w={48} c="#a01d22" />
      <Terminals x={851} w={51} c="#12639a" />
      <Terminals x={909} w={27} c="#a01d22" />
      <Terminals x={937} w={26} c="#12639a" />
      <Terminals x={970} w={16} c="#333333" />
      <Terminals x={987} w={17} c="#c9c9c9" />
      <Terminals x={1004} w={42} c="#3c8f2c" />
      {[820, 830, 868, 878].map((x) => (
        <g key={x} fill="#333" stroke="#080808"><rect x={x} y="467" width="8" height="5" rx="1.500" /><rect x={x} y="491" width="8" height="6" rx="1.500" /></g>
      ))}
      <Clamp x={901} y={466} w={8} />
      <Clamp x={962} y={466} w={8} />
      <Clamp x={1046} y={466} w={8} />
      {[[801, 68], [873, 70], [962, 40]].map(([x, w]) => (
        <g key={x}>
          <rect x={x} y="572.500" width={w} height="34.500" rx="1" fill="#080808" />
          <path d={`M${x + 2} 586.500h${w - 4}`} stroke="#595959" strokeWidth="2" strokeDasharray="1.500 1.600" />
          <path d={`M${x + 2} 580h${w - 4}M${x + 2} 593h${w - 4}M${x + 2} 600h${w - 4}`} stroke="#1e1e1e" strokeWidth="3" strokeDasharray="1.500 1.600" />
        </g>
      ))}
      <Clamp x={796} y={573} w={5} /><Clamp x={868} y={573} w={7} /><Clamp x={941} y={573} w={7} /><Clamp x={957} y={573} w={7} /><Clamp x={1007} y={573} w={8} />
      <rect x="983" y="590" width="5" height="2" fill="#5a1116" />

      {/* loose wires */}
      <path d="M833.500 607v16M833.500 664v26" stroke="#555" strokeDasharray="2 1" />
      <path d="M854.500 607v16M854.500 664v26" stroke="#3037a8" strokeWidth="1.500" />
      <path d="M843.500 593v97" stroke="#555" /><path d="M844.700 593v97" stroke="#a08a6a" strokeWidth="1.200" /><path d="M846.500 593v97" stroke="#5c5478" strokeWidth="2" />

      {/* glands under the enclosure */}
      <path d="M839 690l2-5h8l3 5zM869 690v-3l3-3h7l3 3v3zM933 688h2M938 688h2M943 688h2" fill="#111" stroke="#111" strokeWidth="1.500" />
      <path d="M732 705.500h508" stroke="#111" strokeWidth="2" />
      <path d="M796 707h32v4H796z" fill="#666" stroke="#0a0a0a" />
      <rect x="794" y="711" width="35" height="7" rx="2" fill="#9a9a9a" stroke="#0a0a0a" strokeWidth="1.500" />
      <path d="M798 718h27l2 5h-31z" fill="#333" stroke="#0a0a0a" />
      <path d="M795.500 715v17M828 715v17M801 724.500h22" stroke="#0a0a0a" strokeWidth="2.600" />
      <path d="M832 708h27v3h-6l-2 3h-12l-2-3h-5zM868 706h14v5l-2 3h-10l-2-3z" fill="#0a0a0a" />

      {/* cables */}
      <Plug />
      <rect x="806" y="816" width="13" height="61" fill="url(#cable)" stroke="#111" />
      <g transform="translate(0 1693.500) scale(1 -1)"><Plug /></g>
      <path d="M804 949h17v5h-17z" fill="#111" /><path d="M810 949v5M815 949v5" stroke="#777" />

      <path d="M831 728l3-1h4l1 5v27h-7v-12h-2z" fill="#0d0d0d" />
      <rect x="833" y="729" width="4" height="5" fill="#888" />
      <rect x="833" y="760" width="4" height="65" fill="#d9a520" stroke="#3a2a05" strokeWidth=".9" />
      <path d="M835 826v7" stroke="#3c6f9c" strokeWidth="2.200" />
      <path d="M840 729l3-5h4l3 5v7h2v24l-2 8h-10l-2-8v-24h2z" fill="#1a1a1a" />
      <path d="M841 732h8M840 738h11M841 751h9M841 762h9" stroke="#777" strokeWidth="1.500" />
      <rect x="843" y="769" width="4.500" height="17" fill="#8ba0ad" stroke="#222" strokeWidth=".8" />
      <path d="M843 786h5l1 9 2 8v31l-1 5h1v18l-3 4h-6l-2-4v-18l1-5h-1v-31l2-8z" fill="#1a1a1a" />
      <path d="M841 807h9v13h-9z" fill="#4a4a4a" /><path d="M840 835h11" stroke="#ddd" strokeWidth="3" />
      <path d="M841 839h9v7h-9z" fill="#154468" /><path d="M843 851v8M848 851v8" stroke="#aaa" strokeWidth="1.600" />
      <path d="M853 731l11-1 1 10-3 2v14l-1 11h-8l-2-11v-15z" fill="#161616" />
      <path d="M853 744h8v9h-8z" fill="#444" /><path d="M857 770v35" stroke="#2b2b2b" strokeWidth="5" /><path d="M854.500 783h5" stroke="#eee" strokeWidth="2.500" /><path d="M857 787v17" stroke="#555" strokeWidth="2" />

      <rect x="930.500" y="728.500" width="16" height="14.500" rx="1.500" fill="#3b3b3b" stroke="#0a0a0a" strokeWidth="1.400" />
      <path d="M938.500 743v50" stroke="#222" strokeWidth="3.200" /><path d="M938.500 743v50" stroke="#666" />
      <rect x="934" y="792" width="9" height="14" rx="2" fill="#333" stroke="#0a0a0a" strokeWidth="1.400" />
      <rect x="936.500" y="806" width="4.500" height="7" fill="#444" stroke="#0a0a0a" />

      <circle cx="735.300" cy="705" r="5.200" fill="#fff" stroke="#222" strokeWidth="1.800" />
      <circle cx="735.300" cy="705" r="2" fill="#222" />
    </svg>
  );
}

/* ---------- view navigation ---------- */

function ViewCube() {
  return (
    <div className="absolute right-[12px] top-[60px] h-[200px] w-[200px]">
      <svg width="200" height="200" viewBox="1698 150 200 200" fill="none" className="block">
        <g fill="#e3e8ec">
          <path d="M1797.500 154l9 12h-18zM1797.500 341l9-12.500h-18zM1704 247.500l12-9v18zM1891 247.500l-12-9v18z" />
          <path d="M1731 182l5 5q16-18 34-23l3 7q-18 5-31 20l4 4h-15zM1864 182l-5 5q-16-18-34-23l-3 7q18 5 31 20l-4 4h15z" />
          <path d="M1776 212h44v7h6v6h7v45h-7v7h-6v7h-44v-7h-6v-7h-7v-45h7v-6h6z" />
        </g>
        <rect x="1770" y="220" width="55" height="55" rx="13" fill="#fff" />
        <path d="M1759.500 212v74" stroke="#3a3ae0" strokeWidth="1.600" />
        <path d="M1759.500 285.500h74" stroke="#d84545" strokeWidth="1.600" />
        <text x="1797.500" y="253" textAnchor="middle" fontSize="15.500" fontFamily="Roboto, sans-serif" fill="#333">Front</text>
        <text x="1759.500" y="205" textAnchor="middle" fontSize="15" fontWeight="700" fontFamily="Roboto, sans-serif" fill="#2a2ad8">Z</text>
        <text x="1845.500" y="291.500" textAnchor="middle" fontSize="15" fontWeight="700" fontFamily="Roboto, sans-serif" fill="#d23b3b">X</text>
        <path d="M1842.500 322l11-3 11 3v15l-11 5-11-5z" fill="#fff" stroke="#333" strokeWidth="1.200" />
        <path d="M1843 322l10.500 4v15.500L1843 337z" fill="#a0a0a0" />
        <path d="M1853.500 326l10.500-4v15l-10.500 4.500z" fill="#d6dad6" />
        <path d="M1875.500 327.500h9.500l-4.700 5.500z" fill="#333" />
      </svg>
    </div>
  );
}

const toolIcons = [
  <Svg key="a" w={24} h={24}>
    <rect x="1" y="1" width="21.500" height="21.500" rx="2.500" stroke={INK} strokeWidth="1.300" />
    <path d="M4 6.500h13M7 11h12M9 15h10M9 18.500h10" stroke={INK} strokeWidth="2.300" />
    <path d="M6.500 7v11.500H10M6.500 11h3M6.500 15h3" stroke={INK} />
  </Svg>,
  <Svg key="b" w={25} h={25}>
    <path d="M15 4.500l9 4.500v10l-9 5-9-5V9zM6 9l9 4.500L24 9M15 13.500V24" stroke={INK} strokeWidth="1.400" />
    <rect width="13" height="10" fill="#1651b0" />
    {[0, 1, 2].map((c) => [0, 1, 2].map((r) => <rect key={`${c}${r}`} x={1.2 + c * 4} y={1.2 + r * 2.9} width="2.800" height="1.900" fill={r === 2 ? "#fff" : "#8ec5f5"} />))}
  </Svg>,
  <Svg key="c" w={24} h={25}>
    <path d="M1 1.500h5l2 2V9H3.500L1 7zM1 1.500l2.500 2H8M3.500 3.500V9" fill="#ccc" stroke="#444" />
    <path d="M5 11v2h8" stroke="#1651b0" strokeWidth="1.600" strokeDasharray="3 1" />
    <path d="M9 18l3-2h3.500V10l2.500-1.500h2.500L23 11v12.500H12.500L9 20.500zM9 18l3.500 2h5.500v-8L23 11M12.500 20v3.500M18 12l-2.500-2M18 20l-2.500-4" fill="#fff" stroke="#444" strokeLinejoin="round" />
  </Svg>,
  <Svg key="d" w={24} h={24}>
    <path d="M18 14H1.500v9H18" stroke={INK} strokeWidth="1.500" />
    <path d="M14 17V1h8.500v16" stroke="#1651b0" strokeWidth="1.600" strokeDasharray="3 1.600" />
    <circle cx="18.300" cy="18.500" r="4.700" fill="#fff" stroke="#1651b0" strokeWidth="1.600" />
    <circle cx="18.300" cy="18.500" r="2" stroke={INK} strokeWidth="1.300" />
  </Svg>,
  <Svg key="e" w={21} h={24}>
    <path d="M9.700 1v9L4 6.300z M11.300 1v9L17 6.300z" fill="#8ec5f5" />
    <path d="M3.500 7.500L9 11.300.5 15z" fill="#1651b0" /><path d="M17.500 7.500L12 11.300l8.500 3.700z" fill="#aaa" />
    <path d="M9.700 12.500V23.500L1.500 16.500z" fill="#1651b0" /><path d="M11.300 12.500V23.500l8.200-7z" fill="#999" />
  </Svg>,
  <VariableTab key="f" />,
];

function ToolRail() {
  return (
    <div className="absolute right-0 top-[301px] w-[40px]">
      <div className="border border-r-0 border-[#aaa]">
        {toolIcons.map((icon, i) => (
          <div key={i} className={`flex h-[41.3px] items-center justify-center pt-0.5 ${i ? "border-t border-[#aaa]" : ""}`}>
            {icon}
          </div>
        ))}
      </div>
      <div className="mt-[13px] flex h-[42px] items-center border border-r-0 border-[#aaa] pl-[5px]">
        <div className="flex h-[30px] w-[30px] items-center justify-center rounded bg-[#d5d9d6]">
          <Svg w={24} h={26}>
            <path d="M20 2.500L4 23.500" stroke="#1478f0" strokeWidth="6" />
            <path d="M4 2.500l16 21" stroke="#2736c4" strokeWidth="6.500" />
            <path d="M6.500 2.500l16 21" stroke="#1478f0" strokeWidth="2.500" />
            <path d="M6 14l-4.500 7.500 3 2L12 14z" fill="#2736c4" />
            <path d="M5.500 2.500l16 21M20 2.500l-6 8M6 22l6-8" stroke="#d5d9d6" strokeWidth=".8" />
          </Svg>
        </div>
      </div>
    </div>
  );
}

function Canvas() {
  return (
    <main className="relative flex-1">
      <Model />
      <div className="absolute left-[140px] top-[2px] flex h-[41px] w-[629px] items-center rounded-b-[12px] border border-t-0 border-[#c8c8c8] pl-[26px]">
        <span className="w-[306px] whitespace-nowrap pt-0.5 text-[17px] font-bold tracking-[0.44px] text-[#444]">Versions are view only. Viewing V26.</span>
        <button className="h-[34px] w-[228px] whitespace-nowrap rounded-[3px] bg-[#1651b0] pt-px text-[15px] font-medium tracking-[0.07px] text-white">Return to Control Box - Field IO</button>
        <div className="ml-[18px] pt-px"><Help color="#888" size={23} /></div>
      </div>
      <ViewCube />
      <ToolRail />
      <button className="absolute left-[-2px] top-[432px] flex h-[42px] w-[42px] items-center justify-center border border-l-0 border-[#aaa] bg-white pt-1">
        <Svg w={24} h={24}>
          <path d="M1 1.500l3 3.500 3-3.500" stroke={INK} strokeWidth="1.800" />
          <path d="M10 2.500h13M4 7v16M7 9h16M7 15.500h16M7 22h16" stroke={INK} strokeWidth="1.500" />
        </Svg>
      </button>
      <div className="absolute bottom-[9px] right-[16px] flex items-end">
        <Svg w={21} h={20} className="mr-[20px]">
          <path d="M1 10h10.500a4.500 4.500 0 0 1-2-3.700c0-7 10.500-7 10.500 0V16l-2.500 2.500H1z" stroke={INK} strokeWidth="1.500" />
          <ellipse cx="14.500" cy="6.300" rx="2.400" ry="1.700" stroke={INK} strokeWidth="1.300" />
          <path d="M12 10c3 1 6 0 7-2M4 18v-3M7 18v-4M10 18v-3M13 18v-4" stroke={INK} />
        </Svg>
        <Svg w={26} h={20} className="mr-[22px]">
          <path d="M1 18.500v-4.500C1 7 6 1.500 13 1.500S25 7 25 14v4.500z" stroke={INK} strokeWidth="1.700" />
          <path d="M6 15.500c0-5 3-8 7-8s7 3 7 8h-3a4 4 0 0 0-8 0z" stroke={INK} strokeWidth="1.300" />
          <path d="M4 13l1.500.3M5.500 8l1 .8M9 4.800l.6 1M13 3.500v1.200M17 4.800l-.6 1M20.500 8l-1 .8M22 13l-1.500.3" stroke={INK} />
        </Svg>
        <Svg w={18} h={20}>
          <path d="M1 1.500h16M7.500 2v14M10.500 2v14" stroke={INK} strokeWidth="1.300" />
          <path d="M3.500 2L.8 10.500h5.400zM14.500 2l-2.700 8.500h5.400z" stroke={INK} />
          <path d="M1 11h5M12 11h5" stroke={INK} strokeWidth="2" />
          <path d="M0 19h18M2 16.500h14" stroke={INK} strokeWidth="1.700" />
        </Svg>
      </div>
    </main>
  );
}

/* ---------- tabs ---------- */

const tabs = [
  { label: "Fork Proof Load Compl...", icon: <ImageTab />, w: "w-[251px]", pad: "pl-[13px]", tx: "ml-[4px] tracking-[0.1px]" },
  { label: "Subpanel Assembly", icon: <AssemblyTab />, w: "w-[234px]", pad: "pl-[12px]", tx: "ml-[5px] tracking-[0.28px]" },
  { label: "Wiring Part Studio", icon: <PartTab />, w: "w-[221px]", pad: "pl-[14px]", tx: "ml-[5px] tracking-[0.13px]" },
  { label: "Quest Fork Proof Load ...", icon: <DocTab />, w: "w-[250px]", pad: "pl-[15px]", tx: "ml-[7px] tracking-[0.08px]" },
  { label: "Wiring", icon: <AssemblyTab />, w: "w-[131px]", pad: "pl-[13px]", tx: "ml-[5px]" },
  { label: "Wire Variable Studio", icon: <VariableTab />, w: "w-[237px]", pad: "pl-[12px]", tx: "ml-[3px] tracking-[0.2px]" },
  { label: "Variable Studio 1", icon: <VariableTab />, w: "w-[212px]", pad: "pl-[12px]", tx: "ml-[4px] tracking-[0.08px]" },
];

function TabBar() {
  return (
    <nav className="flex h-[37px] shrink-0 items-start bg-[#d5d9d5] text-[17px]">
      <div className="flex h-full w-[49px] items-center justify-center pr-2">
        <Svg w={19} h={19}><path d="M9.500 0v19M0 9.500h19" stroke="#a9adaa" strokeWidth="3.300" /></Svg>
      </div>
      <div className="flex h-[35px] w-[250px] items-center rounded-b-[5px] border-b-[3px] border-[#1651b0] bg-white pl-[13px] text-[#333]">
        <AssemblyTab />
        <span className="ml-[4px] whitespace-nowrap pt-0.5 tracking-[0.24px]">Complete Control Panel</span>
      </div>
      <div className="ml-[2px] flex gap-[2px]">
        {tabs.map((t) => (
          <div key={t.label} className={`flex h-[33px] items-center rounded-b-[6px] bg-[#e9e9e9] text-[#666] ${t.w} ${t.pad}`}>
            {t.icon}
            <span className={`whitespace-nowrap pt-0.5 ${t.tx}`}>{t.label}</span>
          </div>
        ))}
      </div>
    </nav>
  );
}

export default function App() {
  return (
    <div className="flex h-[1020px] w-[1920px] flex-col overflow-hidden bg-[#263e27] font-[Roboto,sans-serif]">
      <BrowserBar />
      <div className="mx-[10px] flex h-[970px] flex-col overflow-hidden rounded-[6px] bg-white">
        <Header />
        <div className="flex min-h-0 flex-1">
          <LeftRail />
          <div className="flex min-w-0 flex-1 flex-col">
            <div className="flex h-[883px] shrink-0">
              <Panel />
              <Canvas />
            </div>
            <TabBar />
          </div>
        </div>
      </div>
    </div>
  );
}
